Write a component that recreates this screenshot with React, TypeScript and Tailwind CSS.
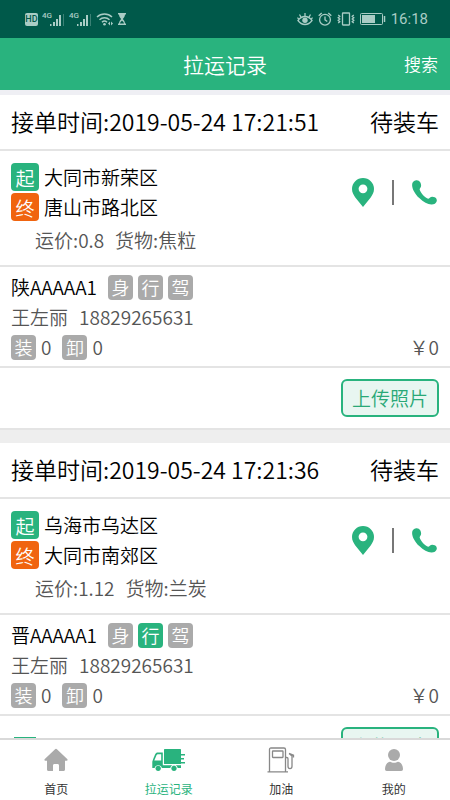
import React from "react";
import clsx from "clsx";

interface Tag {
  label: string;
  active?: boolean;
}

interface HaulRecord {
  id: number;
  time: string;
  status: string;
  from: string;
  to: string;
  price: string;
  cargo: string;
  plate: string;
  tags: Tag[];
  driver: string;
  phone: string;
  loaded: number;
  unloaded: number;
  amount: number;
  marked?: boolean;
}

const RECORDS: HaulRecord[] = [
  {
    id: 1,
    time: "2019-05-24 17:21:51",
    status: "待装车",
    from: "大同市新荣区",
    to: "唐山市路北区",
    price: "0.8",
    cargo: "焦粒",
    plate: "陕AAAAA1",
    tags: [{ label: "身" }, { label: "行" }, { label: "驾" }],
    driver: "王左丽",
    phone: "18829265631",
    loaded: 0,
    unloaded: 0,
    amount: 0,
  },
  {
    id: 2,
    time: "2019-05-24 17:21:36",
    status: "待装车",
    from: "乌海市乌达区",
    to: "大同市南郊区",
    price: "1.12",
    cargo: "兰炭",
    plate: "晋AAAAA1",
    tags: [{ label: "身" }, { label: "行", active: true }, { label: "驾" }],
    driver: "王左丽",
    phone: "18829265631",
    loaded: 0,
    unloaded: 0,
    amount: 0,
    marked: true,
  },
];

const SignalIcon = () => (
  <svg width="23" height="18" viewBox="0 0 23 18" fill="currentColor">
    <text x="0" y="8" fontSize="8" fontWeight="500" fontFamily="Roboto, sans-serif">
      4G
    </text>
    <rect x="8" y="14" width="1.5" height="2" />
    <rect x="11" y="12" width="2" height="4" />
    <rect x="14" y="9" width="2" height="7" />
    <rect x="17" y="5" width="2" height="11" />
    <rect x="21" y="4" width="1" height="12" opacity="0.35" />
  </svg>
);

const WifiIcon = () => (
  <svg width="18" height="14" viewBox="0 0 18 14" fill="none" stroke="currentColor" strokeWidth="1.5">
    <path d="M1 5a11 11 0 0 1 15 0M3.5 7.7a7.2 7.2 0 0 1 10 0M6 10.2a3.6 3.6 0 0 1 5 0" />
    <circle cx="8.5" cy="12.3" r="1.3" fill="currentColor" stroke="none" />
    <path d="M14 9.5v4l-2-2zM15 9.5v4l2-2z" fill="currentColor" stroke="none" />
  </svg>
);

const HourglassIcon = () => (
  <svg width="8" height="12" viewBox="0 0 8 12" fill="currentColor">
    <path d="M0 0h8v1.5H7C7 4 5.5 5 4.8 6 5.5 7 7 8 7 10.5h1V12H0v-1.5h1C1 8 2.5 7 3.2 6 2.5 5 1 4 1 1.5H0z" />
    <path d="M2 10.5c.3-1.5 1.3-2 2-2.7.7.7 1.7 1.2 2 2.7z" fill="#00594a" />
  </svg>
);

const EyeIcon = () => (
  <svg width="16" height="14" viewBox="0 0 16 14" fill="none" stroke="currentColor" strokeWidth="1.3">
    <path d="M1 8.5C3 5.7 5.3 4.5 8 4.5s5 1.2 7 4c-2 2.8-4.3 4-7 4s-5-1.2-7-4z" />
    <path d="M8 4.5V1M4 5.3 2.5 2.5M12 5.3l1.5-2.8M1.8 7 .4 5.6M14.2 7l1.4-1.4" />
    <circle cx="8" cy="8.3" r="2.7" fill="currentColor" stroke="none" />
  </svg>
);

const AlarmIcon = () => (
  <svg width="14" height="14" viewBox="0 0 14 14" fill="none" stroke="currentColor" strokeWidth="1.3">
    <circle cx="7" cy="7.7" r="5.4" />
    <path d="M7 4.5v3.4l2.3 1.6M.7 3.8 3.7 1M13.3 3.8l-3-2.8" />
  </svg>
);

const VibrateIcon = () => (
  <svg width="18" height="14" viewBox="0 0 18 14" fill="none" stroke="currentColor" strokeWidth="1.3">
    <rect x="5.5" y="1" width="7" height="12" rx="0.5" />
    <path d="m1.2 3 1.6 1.3L1.2 5.7 2.8 7 1.2 8.3l1.6 1.4L1.2 11M16.8 3l-1.6 1.3 1.6 1.4L15.2 7l1.6 1.3-1.6 1.4 1.6 1.3" />
  </svg>
);

const BatteryIcon = () => (
  <svg width="26" height="12" viewBox="0 0 26 12" fill="none" stroke="currentColor">
    <rect x="0.5" y="0.5" width="22" height="11" rx="1" />
    <rect x="2" y="2" width="13" height="8" fill="currentColor" stroke="none" />
    <path d="M24.5 3v6" strokeWidth="1.5" />
  </svg>
);

const PinIcon = () => (
  <svg width="22" height="29" viewBox="0 0 22 29" fill="#29b37e">
    <path
      fillRule="evenodd"
      d="M11 0a11 11 0 0 0-11 11c0 3.5 1.6 6 3.3 8.4L11 29l7.7-9.6C20.4 17 22 14.5 22 11A11 11 0 0 0 11 0zm0 6.4a4.4 4.4 0 1 1 0 8.8 4.4 4.4 0 0 1 0-8.8z"
    />
  </svg>
);

const PhoneIcon = () => (
  <svg width="25" height="25" viewBox="0 0 25 25" fill="#29b37e">
    <path d="M4.2.2C1.8.4.1 2.2.1 4.9c0 4 3 9.2 7.2 13.2 4 3.9 8.500 6.400 12.100 6.500 2.500.1 4.800-1.200 5.300-3.300.4-1.700-.3-3.100-2-4-1.700-1-3.700-.9-4.900.4-.7.8-1.400 1.200-2.400.8-3-1.300-6.300-5-7.600-8.400-.4-1 .1-1.600.6-2.300 1.100-1.600.9-3.700-.3-5.700C7.400.8 6 0 4.200.2z" />
  </svg>
);

const HomeIcon = () => (
  <svg width="24" height="24" viewBox="0 0 24 24" fill="#aaaaaa">
    <path d="M10.8 1.4a1.7 1.7 0 0 1 2.4 0l10 9.7c.8.8.4 1.7-.6 1.7H21v8.7c0 .9-.6 1.5-1.5 1.5H15v-5.500c0-1-.7-1.500-1.500-1.500h-3c-.9 0-1.500.6-1.500 1.500V23H4.500c-.9 0-1.500-.6-1.500-1.500v-8.700H1.400c-1 0-1.400-.9-.6-1.700z" />
  </svg>
);

const TruckIcon = () => (
  <svg width="34" height="22" viewBox="0 0 34 22" fill="#29b37e">
    <rect x="12" y="0" width="17" height="15" rx="0.6" />
    <path
      fillRule="evenodd"
      d="M10.8 3.5v12.7H29V19h-3.3a3.8 3.8 0 0 0-7.4 0H9.9a3.8 3.8 0 0 0-7.3 0H.3v-6.200c0-.7 2-5.700 2.900-7.600.6-1.200 1.300-1.700 2.600-1.700zM9.200 5.200H5.900c-.7 0-1.100.3-1.400 1L2.300 11.600h6.900z"
    />
    <circle cx="6.2" cy="19.3" r="2.6" />
    <circle cx="22" cy="19.3" r="2.6" />
    <rect x="28" y="5" width="5" height="1.5" />
    <rect x="28" y="9" width="4" height="1.5" />
    <rect x="28" y="13" width="5" height="1.5" />
  </svg>
);

const FuelIcon = () => (
  <svg width="28" height="26" viewBox="0 0 28 26" fill="none" stroke="#888888" strokeWidth="1.3">
    <path d="M2.5 24.5v-22c0-1 .5-1.5 1.500-1.500h13c1 0 1.500.5 1.500 1.500v22M.5 24.800H21" />
    <rect x="5.5" y="4" width="10.5" height="6.5" rx="0.5" />
    <path d="M18.5 10.5h1.300c.8 0 1.200.5 1.200 1.300v7.500c0 3 4 3 4 0V9l-3-2.500M22 6.300l4.500 1.800v2.400" />
  </svg>
);

const UserIcon = () => (
  <svg width="18" height="22" viewBox="0 0 18 22" fill="#aaaaaa">
    <circle cx="9" cy="6" r="6" />
    <path d="M0 20c0-3.5 2-7 5-7.3 1.3.4 2.3 1 4 1s2.7-.6 4-1c3 .3 5 3.8 5 7.3 0 1.3-.6 2-1.8 2H1.800C.6 22 0 21.300 0 20z" />
  </svg>
);

const TABS = [
  { label: "首页", icon: HomeIcon },
  { label: "拉运记录", icon: TruckIcon, active: true },
  { label: "加油", icon: FuelIcon },
  { label: "我的", icon: UserIcon },
];

const SmallTag: React.FC<Tag> = ({ label, active }) => (
  <span
    className={clsx(
      "flex size-[25px] items-center justify-center rounded text-lg leading-none text-white",
      active ? "bg-[#29b37e]" : "bg-[#aaaaaa]",
    )}
  >
    {label}
  </span>
);

const Place: React.FC<{ tag: string; name: string; end?: boolean }> = ({ tag, name, end }) => (
  <div className="flex items-center gap-[5px]">
    <span
      className={clsx(
        "flex size-7 items-center justify-center rounded text-[19px] leading-none text-white",
        end ? "bg-[#f0640f]" : "bg-[#29b37e]",
      )}
    >
      {tag}
    </span>
    <span>{name}</span>
  </div>
);

const RecordCard: React.FC<{ record: HaulRecord }> = ({ record }) => (
  <article className="bg-white text-[19px] leading-7 text-[#555555]">
    <header className="flex items-center justify-between border-b-2 border-[#e4e4e4] px-[11px] pt-[10px] pb-3 text-[23px] leading-8 text-black">
      <h2>接单时间:{record.time}</h2>
      <span>{record.status}</span>
    </header>

    <div className="flex items-start justify-between border-b-2 border-[#e4e4e4] px-[11px] pt-3 pb-[11px]">
      <div className="flex flex-col gap-[2px] text-black">
        <Place tag="起" name={record.from} />
        <Place tag="终" name={record.to} end />
        <p className="mt-[3px] flex gap-[11px] pl-6 text-[#555555]">
          <span>运价:{record.price}</span>
          <span>货物:{record.cargo}</span>
        </p>
      </div>
      <div className="flex items-center gap-[18px] pt-[15px] pr-[2px]">
        <button aria-label="位置">
          <PinIcon />
        </button>
        <span className="h-[25px] w-[2px] bg-[#777777]" />
        <button aria-label="电话">
          <PhoneIcon />
        </button>
      </div>
    </div>

    <div className="flex flex-col gap-[2px] border-b-2 border-[#e4e4e4] px-[11px] pt-[6px] pb-[5px]">
      <div className="flex items-center gap-[11px]">
        <span className="text-black">{record.plate}</span>
        <div className="flex gap-[5px]">
          {record.tags.map((tag) => (
            <SmallTag key={tag.label} {...tag} />
          ))}
        </div>
      </div>
      <p className="flex gap-[11px]">
        <span>{record.driver}</span>
        <span>{record.phone}</span>
      </p>
      <div className="flex items-center justify-between">
        <div className="flex items-center gap-[5px]">
          <SmallTag label="装" />
          <span className="mr-[6px]">{record.loaded}</span>
          <SmallTag label="卸" />
          <span>{record.unloaded}</span>
        </div>
        <span>￥{record.amount}</span>
      </div>
    </div>

    <div className="flex items-center border-b-2 border-[#e4e4e4] px-[11px] py-[11px]">
      {record.marked && <span className="ml-[3px] h-[18px] w-[22px] bg-[#29b37e]" />}
      <button className="ml-auto rounded-md border-2 border-[#29b37e] bg-[#e8f6f1] px-[9px] py-[3px] text-[#29a877]">
        上传照片
      </button>
    </div>
  </article>
);

const App: React.FC = () => (
  <div className="flex h-screen flex-col bg-[#efeff4] font-['Noto_Sans_CJK_SC',sans-serif] font-[350]">
    <div className="flex h-[38px] shrink-0 items-center justify-between bg-[#00594a] pr-[22px] pl-[25px] text-[#a9ccc5]">
      <div className="flex items-center gap-1">
        <span className="flex size-[13px] items-center justify-center rounded-[2px] bg-[#a9ccc5] font-[Roboto,sans-serif] text-[9px] leading-none font-medium text-[#00594a]">
          HD
        </span>
        <SignalIcon />
        <SignalIcon />
        <WifiIcon />
        <HourglassIcon />
      </div>
      <div className="flex items-center gap-[5px]">
        <EyeIcon />
        <AlarmIcon />
        <VibrateIcon />
        <BatteryIcon />
        <span className="font-[Roboto,sans-serif] text-[15px] leading-5 font-normal">16:18</span>
      </div>
    </div>

    <header className="grid shrink-0 grid-cols-3 items-center bg-[#29b37e] px-3 py-[10px] text-white">
      <h1 className="col-start-2 text-center text-[21px] leading-8">拉运记录</h1>
      <button className="justify-self-end text-[17px] leading-8">搜索</button>
    </header>

    <main className="min-h-0 flex-1 overflow-hidden pt-[5px]">
      <div className="flex flex-col gap-[13px] bg-[#eeeeee]">
        {RECORDS.map((record) => (
          <RecordCard key={record.id} record={record} />
        ))}
      </div>
    </main>

    <nav className="grid shrink-0 grid-cols-4 border-t-2 border-[#d9d9d9] bg-white pt-[6px] pb-px">
      {TABS.map(({ label, icon: Icon, active }) => (
        <a
          key={label}
          href="#"
          className={clsx(
            "flex flex-col items-center gap-[5px] text-xs leading-5 font-normal",
            active ? "text-[#29b37e]" : "text-[#333333]",
          )}
        >
          <span className="flex h-7 items-center">
            <Icon />
          </span>
          {label}
        </a>
      ))}
    </nav>
  </div>
);

export default App;
